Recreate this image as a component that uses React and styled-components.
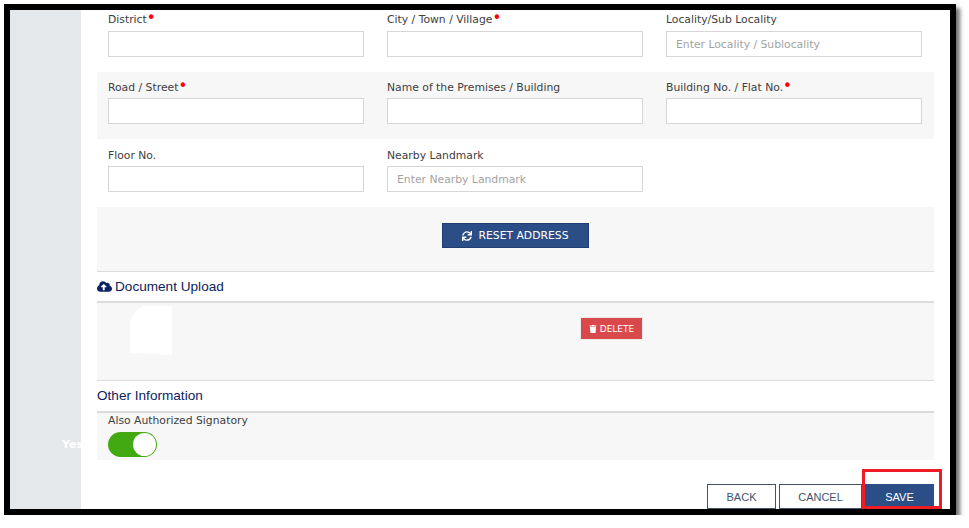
import React from "react";
import styled, { createGlobalStyle } from "styled-components";
import { FaCloudUploadAlt, FaSync, FaTrash } from "react-icons/fa";

const GlobalStyle = createGlobalStyle`
    html, body {
        margin: 0;
        padding: 0;
        background: #fff;
        overflow: hidden;
    }
    * {
        box-sizing: border-box;
    }
`;

const Frame = styled.div`
    position: relative;
    width: 952px;
    height: 511px;
    margin: 4px 0 0 4px;
    border: 6px solid #000;
    box-shadow: 4px 4px 4px rgba(0, 0, 0, 0.55);
    background: #fff;
    display: flex;
    overflow: hidden;
`;

const Sidebar = styled.aside`
    width: 71px;
    flex: none;
    background: #e4e8eb;
`;

const Main = styled.main`
    flex: 1;
    padding: 0 16px;
    display: flex;
    flex-direction: column;
    > * {
        flex: none;
    }
`;

const Label = styled.label`
    display: block;
    height: 21px;
    font: 10.8px/19px "DejaVu Sans", Verdana, sans-serif;
    color: #404040;
    white-space: nowrap;
`;

const FieldRow = styled.div`
    display: grid;
    grid-template-columns: repeat(3, 256px);
    column-gap: 23px;
    padding: ${(props) => props.$pad};
    background: ${(props) => (props.$shaded ? "#f7f7f7" : "#fff")};
    height: ${(props) => props.$height}px;
    ${Label} {
        height: ${(props) => props.$labelHeight}px;
    }
`;

const Star = styled.span`
    color: #f00;
    font-size: 15px;
    line-height: 0;
    vertical-align: 0;
`;

const Input = styled.input`
    display: block;
    width: 100%;
    height: 26px;
    padding: 0 9px;
    border: 1px solid #d6d6d6;
    background: #fff;
    font: 10.8px "DejaVu Sans", Verdana, sans-serif;
    color: #404040;
    &::placeholder {
        color: #a2a2a2;
        opacity: 1;
    }
`;

const ResetBar = styled.div`
    height: 65px;
    background: #f7f7f7;
    border-bottom: 1px solid #dcdcdc;
    display: flex;
    justify-content: center;
    padding-top: 16px;
`;

const PrimaryButton = styled.button`
    width: 147px;
    height: 25px;
    margin: 0;
    padding: 0;
    background: #2c4e86;
    border: 1px solid #1f3d70;
    color: #fff;
    font: 10.8px "DejaVu Sans", Verdana, sans-serif;
    display: flex;
    align-items: center;
    justify-content: center;
    gap: 6px;
    svg {
        width: 10px;
        height: 10px;
    }
`;

const SectionTitle = styled.h4`
    margin: 0;
    height: ${(props) => props.$height}px;
    padding-bottom: ${(props) => props.$lift || 0}px;
    display: flex;
    align-items: center;
    gap: 3px;
    font: 400 13.6px "Liberation Sans", Arial, sans-serif;
    color: #0d2260;
    border-bottom: 2px solid #dcdcdc;
    svg {
        width: 15px;
        height: 13px;
    }
`;

const UploadPanel = styled.div`
    position: relative;
    height: 78px;
    background: #f7f7f7;
    border-bottom: 1px solid #dcdcdc;
    display: flex;
    justify-content: flex-end;
    padding: 14px 291px 0 0;
`;

const Redaction = styled.div`
    position: absolute;
    left: 33px;
    top: 3px;
    width: 42px;
    height: 49px;
    background: #fff;
    clip-path: polygon(12% 12%, 30% 0, 100% 0, 100% 100%, 35% 97%, 0 96%, 0 30%);
`;

const DeleteButton = styled.button`
    width: 63px;
    height: 23px;
    margin: 0;
    padding: 0;
    background: #d9494b;
    border: 1px solid #e9e9e9;
    color: #fff;
    font: 9px "DejaVu Sans", Verdana, sans-serif;
    display: flex;
    align-items: center;
    justify-content: center;
    gap: 3px;
    svg {
        width: 8px;
        height: 8px;
    }
`;

const TogglePanel = styled.div`
    height: 47px;
    background: #f7f7f7;
    padding: 0 11px;
`;

const ToggleLabel = styled(Label)`
    height: 19px;
    line-height: 15px;
`;

const Toggle = styled.div`
    position: relative;
    width: 49px;
    height: 25px;
    border-radius: 13px;
    background: #43a912;
    &::after {
        content: "";
        position: absolute;
        top: 1px;
        right: 1px;
        width: 23px;
        height: 23px;
        border-radius: 50%;
        background: #fff;
    }
`;

const YesText = styled.span`
    position: absolute;
    left: 52px;
    top: 428px;
    font: 700 11px "DejaVu Sans", Verdana, sans-serif;
    color: #fff;
`;

const Actions = styled.div`
    margin-top: 24px;
    display: flex;
    justify-content: flex-end;
    gap: 3px;
`;

const OutlineButton = styled.button`
    width: ${(props) => props.$width}px;
    height: 25px;
    margin: 0;
    padding: 0;
    background: #fff;
    border: 1px solid #44546a;
    color: #44546a;
    font: 11px "Liberation Sans", Arial, sans-serif;
`;

const SaveButton = styled(OutlineButton)`
    background: #2c4e86;
    border-color: #2c4e86;
    color: #fff;
`;

const Highlight = styled.div`
    position: absolute;
    left: 852px;
    top: 459px;
    width: 80px;
    height: 40px;
    border: 3px solid #ee1c25;
    pointer-events: none;
`;

function Field({ label, required, placeholder }) {
    return (
        <div>
            <Label>
                {label}
                {required && <Star>•</Star>}
            </Label>
            <Input placeholder={placeholder} readOnly />
        </div>
    );
}

export default function App() {
    return (
        <>
            <GlobalStyle />
            <Frame>
                <Sidebar />
                <Main>
                    <FieldRow $pad="0 11px" $height={62} $labelHeight={21}>
                        <Field label="District" required />
                        <Field label="City / Town / Village" required />
                        <Field label="Locality/Sub Locality" placeholder="Enter Locality / Sublocality" />
                    </FieldRow>
                    <FieldRow $shaded $pad="6px 11px 0" $height={67} $labelHeight={20}>
                        <Field label="Road / Street" required />
                        <Field label="Name of the Premises / Building" />
                        <Field label="Building No. / Flat No." required />
                    </FieldRow>
                    <FieldRow $pad="7px 11px 0" $height={68} $labelHeight={20}>
                        <Field label="Floor No." />
                        <Field label="Nearby Landmark" placeholder="Enter Nearby Landmark" />
                    </FieldRow>
                    <ResetBar>
                        <PrimaryButton>
                            <FaSync />
                            RESET ADDRESS
                        </PrimaryButton>
                    </ResetBar>
                    <SectionTitle $height={31}>
                        <FaCloudUploadAlt />
                        Document Upload
                    </SectionTitle>
                    <UploadPanel>
                        <Redaction />
                        <DeleteButton>
                            <FaTrash />
                            DELETE
                        </DeleteButton>
                    </UploadPanel>
                    <SectionTitle $height={32} $lift={2}>Other Information</SectionTitle>
                    <TogglePanel>
                        <ToggleLabel>Also Authorized Signatory</ToggleLabel>
                        <Toggle />
                    </TogglePanel>
                    <Actions>
                        <OutlineButton $width={69}>BACK</OutlineButton>
                        <OutlineButton $width={83}>CANCEL</OutlineButton>
                        <SaveButton $width={69}>SAVE</SaveButton>
                    </Actions>
                </Main>
                <YesText>Yes</YesText>
                <Highlight />
            </Frame>
        </>
    );
}
